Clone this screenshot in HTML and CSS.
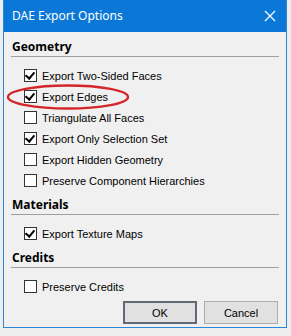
FILE: index.html
```html
<!DOCTYPE html>
<html lang="en">
<head>
    <meta charset="UTF-8">
    <title>DAE Export Options</title>
    <link rel="stylesheet" href="styles.css">
</head>
<body>

<div class="dialog">
    <div class="title-bar">
        <span class="title">DAE Export Options</span>
        <svg class="close" width="12" height="12" viewBox="0 0 12 12">
            <path d="M1 1 L11 11 M11 1 L1 11" stroke="#fff" stroke-width="1.2" fill="none"/>
        </svg>
    </div>

    <div class="content">
        <div class="group-title">Geometry</div>
        <div class="group">
            <div class="row"><span class="box checked"></span>Export Two-Sided Faces</div>
            <div class="row"><span class="box checked"></span>Export Edges</div>
            <div class="row"><span class="box"></span>Triangulate All Faces</div>
            <div class="row"><span class="box checked"></span>Export Only Selection Set</div>
            <div class="row"><span class="box"></span>Export Hidden Geometry</div>
            <div class="row"><span class="box"></span>Preserve Component Hierarchies</div>
        </div>

        <div class="group-title">Materials</div>
        <div class="group">
            <div class="row"><span class="box checked"></span>Export Texture Maps</div>
        </div>

        <div class="group-title">Credits</div>
        <div class="group">
            <div class="row"><span class="box"></span>Preserve Credits</div>
        </div>

        <div class="buttons">
            <button class="btn default">OK</button>
            <button class="btn">Cancel</button>
        </div>

        <!-- red marker drawn over the second option -->
        <svg class="marker" width="128" height="28" viewBox="0 0 128 28">
            <ellipse cx="64" cy="14" rx="60" ry="11.5" stroke="#d3262b" stroke-width="2.4" fill="none"/>
        </svg>
    </div>
</div>

</body>
</html>
```

FILE: styles.css
```css
body {
    margin: 0;
    padding: 0;
    background-color: #eeeeee;
    font-family: "Liberation Sans", Arial, sans-serif;
    font-size: 11px;
    color: #000;
}
.dialog {
    margin-left: 3px;
    width: 282px;
    height: 327px;
    border: 1px solid #2a86d8;
    border-top: none;
    background-color: #f0f0f0;
}
.title-bar {
    height: 32px;
    background-color: #0b78d7;
    display: flex;
    align-items: center;
    justify-content: space-between;
    padding: 0 10px 0 8px;
}
.title {
    color: #fff;
    font-family: "Noto Sans", sans-serif;
    font-size: 12px;
    position: relative;
    top: -1px;
}
.content {
    position: relative;
    padding: 6px 7px 0 7px;
}
.group-title {
    font-family: "Noto Sans", sans-serif;
    font-weight: bold;
    font-size: 12px;
    line-height: 18px;
    padding-left: 1px;
    border-bottom: 1px solid #a0a0a0;
    margin-top: 5px;
}
.content .group-title:first-child {
    margin-top: 0;
}
.group {
    padding-top: 8px;
    padding-left: 13px;
}
.row {
    height: 21px;
    display: flex;
    align-items: center;
}
.box {
    width: 11px;
    height: 11px;
    border: 1px solid #333;
    background-color: #fff;
    margin-right: 5px;
    position: relative;
}
.box.checked::after {
    content: "";
    position: absolute;
    left: 2px;
    top: 0px;
    width: 4px;
    height: 7px;
    border-right: 2px solid #000;
    border-bottom: 2px solid #000;
    transform: rotate(40deg);
}
.buttons {
    display: flex;
    justify-content: flex-end;
    gap: 7px;
    margin-top: 4px;
    padding-right: 1px;
}
.btn {
    width: 74px;
    height: 23px;
    font-family: "Liberation Sans", Arial, sans-serif;
    font-size: 11px;
    background-color: #e1e1e1;
    border: 1px solid #adadad;
    padding: 0;
    color: #000;
}
.btn.default {
    border: 2px solid #5f6a76;
}
.marker {
    position: absolute;
    left: 0;
    top: 51px;
}
```
